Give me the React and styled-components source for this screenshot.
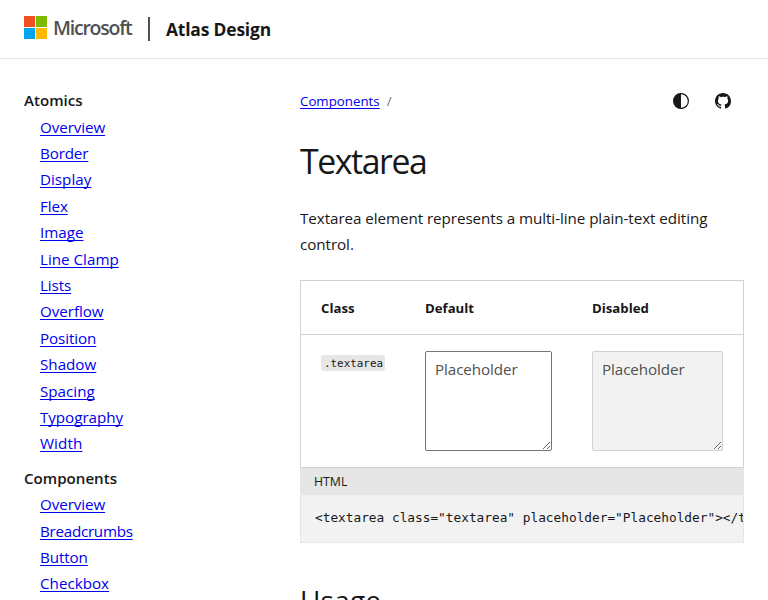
import React from 'react';
import styled, { createGlobalStyle } from 'styled-components';

const sans = '"Open Sans", "Noto Sans", sans-serif';
const mono = '"DejaVu Sans Mono", monospace';

const GlobalStyle = createGlobalStyle`
  *, *::before, *::after { box-sizing: border-box; }
  html, body { margin: 0; height: 600px; overflow: hidden; background: #fff; }
  body { font: 15.2px/26.4px ${sans}; color: #171717; }
`;

const Anchor = styled.a`
  color: #0000ee;
  text-decoration: underline 1px;
  text-underline-offset: 2px;
  text-decoration-skip-ink: none;
  letter-spacing: ${(p) => p.$track || 0}px;
`;
const Header = styled.header`
  display: flex;
  align-items: center;
  height: 59px;
  padding: 0 24px;
  border-bottom: 1px solid #e6e6e6;
`;
const Logo = styled.svg`
  flex: none;
  width: 23px;
  height: 23px;
  margin-top: -4px;
  shape-rendering: crispEdges;
`;
const Brand = styled.span`
  width: 101px;
  padding-left: 6px;
  margin-top: -2px;
  font-size: 19.5px;
  font-weight: 600;
  color: #505050;
  letter-spacing: -1.22px;
`;
const Divider = styled.span`
  width: 2px;
  height: 24px;
  margin-right: 16px;
  background: #505050;
`;
const Site = styled.span`
  font-size: 17.4px;
  font-weight: 700;
  letter-spacing: -0.16px;
`;
const Layout = styled.div`
  display: grid;
  grid-template-columns: 276px 444px;
  padding-left: 24px;
  height: 541px;
`;
const Sidebar = styled.nav`
  padding-top: 28.3px;
`;
const Group = styled.section`
  margin-bottom: 8px;
`;
const GroupTitle = styled.div`
  height: 26.4px;
  font-weight: 600;
  font-size: 15.1px;
`;
const Links = styled.ul`
  list-style: none;
  margin: 0;
  padding: 0 0 0 16px;
`;
const LinkItem = styled.li`
  height: 26.4px;
`;
const Main = styled.main`
  min-width: 0;
`;
const TopBar = styled.div`
  display: flex;
  align-items: center;
  height: 32px;
  margin-top: 26px;
  font-size: 13.3px;
`;
const Slash = styled.span`
  margin-left: 7px;
  color: #757575;
`;
const Actions = styled.div`
  display: flex;
  gap: 26px;
  margin-left: auto;
  padding-right: 13px;
  svg { display: block; width: 16px; height: 16px; }
`;
const Title = styled.h1`
  height: 48px;
  margin: 20px 0 0;
  font-size: 33.8px;
  line-height: 48px;
  font-weight: 400;
  letter-spacing: -1.4px;
`;
const Lead = styled.p`
  margin: 20px 0 22px;
  white-space: nowrap;
  letter-spacing: -0.06px;
`;
const Example = styled.div`
  height: 188px;
  border: 1px solid #d2d2d2;
`;
const Row = styled.div`
  display: grid;
  grid-template-columns: 104px 167px 131px;
  padding: ${(p) => (p.$head ? '14px' : '16px')} 20px 0;
  height: ${(p) => (p.$head ? '54px' : '132px')};
  border-bottom: ${(p) => (p.$head ? '1px solid #d2d2d2' : '0')};
  font-size: ${(p) => (p.$head ? '13.2px' : '15.2px')};
  font-weight: ${(p) => (p.$head ? 700 : 400)};
`;
const ClassTag = styled.code`
  justify-self: start;
  width: 64px;
  height: 16px;
  margin-top: 4px;
  padding-left: 3px;
  border-radius: 3px;
  background: #e6e6e6;
  font: 10.9px/17px ${mono};
`;
const Field = styled.textarea`
  display: block;
  width: ${(p) => (p.disabled ? 131 : 127)}px;
  height: 100px;
  margin: 0;
  padding: 4px 9px;
  border: 1px solid ${(p) => (p.disabled ? '#d2d2d2' : '#757575')};
  border-radius: 2px;
  background: ${(p) => (p.disabled ? '#f2f2f2' : '#fff')};
  font: 15.2px/26.4px ${sans};
  letter-spacing: -0.08px;
  resize: both;
  outline: 0;
  &::placeholder { color: #505050; opacity: 1; }
`;
const CodeHead = styled.div`
  height: 27px;
  padding-left: 14px;
  background: #e6e6e6;
  font-size: 12.3px;
  line-height: 27px;
`;
const CodeBody = styled.pre`
  height: 48px;
  margin: 0;
  padding-left: 14px;
  border: 1px solid #e6e6e6;
  border-top: 0;
  background: #f2f2f2;
  overflow: hidden;
  font: 12.79px/46px ${mono};
`;
const Subtitle = styled.h2`
  margin: 37px 0 0;
  font-size: 28px;
  line-height: 40px;
  font-weight: 400;
  letter-spacing: 0.2px;
`;

const groups = [
  {
    title: 'Atomics',
    items: [['Overview', -0.1], ['Border', -0.15], ['Display'], ['Flex', -0.1], ['Image'], ['Line Clamp'], ['Lists', -0.1], ['Overflow', -0.05], ['Position', -0.1], ['Shadow'], ['Spacing'], ['Typography', -0.05], ['Width', 0.1]],
  },
  { title: 'Components', items: [['Overview', -0.1], ['Breadcrumbs', -0.27], ['Button', -0.1], ['Checkbox']] },
];

const ContrastIcon = () => (
  <svg viewBox="0 0 16 16">
    <circle cx="8" cy="8" r="7.4" fill="none" stroke="#171717" strokeWidth="1.2" />
    <path d="M8 .6a7.4 7.4 0 0 0 0 14.8Z" fill="#171717" />
  </svg>
);
const GithubIcon = () => (
  <svg viewBox="0 0 16 16">
    <path fill="#171717" d="M8 0C3.58 0 0 3.58 0 8c0 3.54 2.29 6.53 5.47 7.59.4.07.55-.17.55-.38 0-.19-.01-.82-.01-1.49-2.01.37-2.53-.49-2.69-.94-.09-.23-.48-.94-.82-1.13-.28-.15-.68-.52-.01-.53.63-.01 1.08.58 1.23.82.72 1.21 1.87.87 2.33.66.07-.52.28-.87.51-1.07-1.78-.2-3.64-.89-3.64-3.95 0-.87.31-1.59.82-2.15-.08-.2-.36-1.02.08-2.12 0 0 .67-.21 2.2.82.64-.18 1.32-.27 2-.27s1.36.09 2 .27c1.53-1.04 2.2-.82 2.2-.82.44 1.1.16 1.92.08 2.12.51.56.82 1.27.82 2.15 0 3.07-1.87 3.75-3.65 3.95.29.25.54.73.54 1.48 0 1.07-.01 1.93-.01 2.2 0 .21.15.46.55.38A8.01 8.01 0 0 0 16 8c0-4.42-3.58-8-8-8Z" />
  </svg>
);

export default function App() {
  return (
    <>
      <GlobalStyle />
      <Header>
        <Logo viewBox="0 0 23 23">
          <path fill="#f25022" d="M0 0h11v11H0z" />
          <path fill="#7fba00" d="M12 0h11v11H12z" />
          <path fill="#00a4ef" d="M0 12h11v11H0z" />
          <path fill="#ffb900" d="M12 12h11v11H12z" />
        </Logo>
        <Brand>Microsoft</Brand>
        <Divider />
        <Site>Atlas Design</Site>
      </Header>
      <Layout>
        <Sidebar>
          {groups.map((g) => (
            <Group key={g.title}>
              <GroupTitle>{g.title}</GroupTitle>
              <Links>
                {g.items.map(([name, track]) => (
                  <LinkItem key={name}>
                    <Anchor href="#" $track={track}>{name}</Anchor>
                  </LinkItem>
                ))}
              </Links>
            </Group>
          ))}
        </Sidebar>
        <Main>
          <TopBar>
            <Anchor href="#">Components</Anchor>
            <Slash>/</Slash>
            <Actions>
              <ContrastIcon />
              <GithubIcon />
            </Actions>
          </TopBar>
          <Title>Textarea</Title>
          <Lead>
            Textarea element represents a multi-line plain-text editing
            <br />
            control.
          </Lead>
          <Example>
            <Row $head>
              <span>Class</span>
              <span>Default</span>
              <span>Disabled</span>
            </Row>
            <Row>
              <ClassTag>.textarea</ClassTag>
              <Field placeholder="Placeholder" />
              <Field placeholder="Placeholder" disabled />
            </Row>
          </Example>
          <CodeHead>HTML</CodeHead>
          <CodeBody>{'<textarea class="textarea" placeholder="Placeholder"></textarea>'}</CodeBody>
          <Subtitle>Usage</Subtitle>
        </Main>
      </Layout>
    </>
  );
}
